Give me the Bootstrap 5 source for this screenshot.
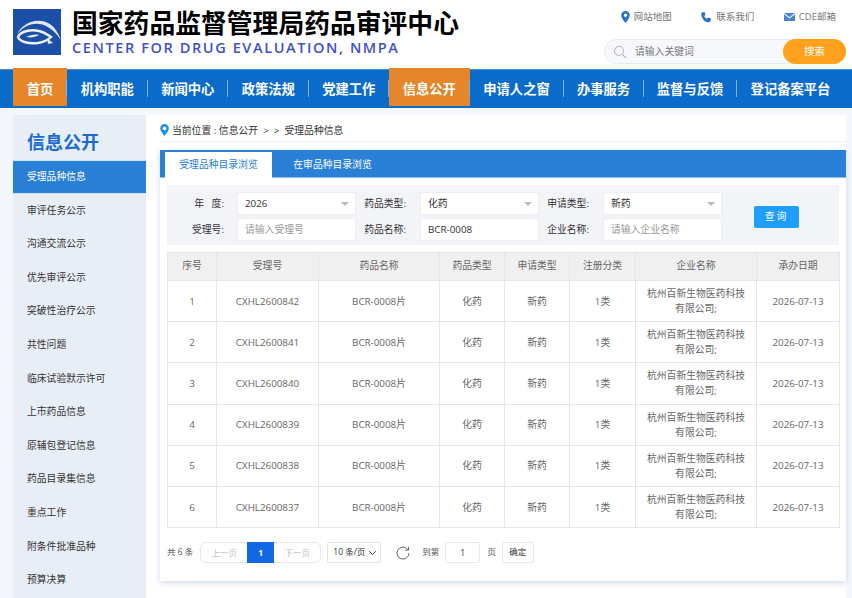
<!DOCTYPE html>
<html lang="zh-CN">
<head>
  <meta charset="UTF-8" />
  <title>受理品种信息</title>
  <meta name="viewport" content="width=device-width, initial-scale=1" />
  <link href="https://cdn.jsdelivr.net/npm/bootstrap@5.3.3/dist/css/bootstrap.min.css" rel="stylesheet" />
  <style>
    html, body { height:100%; overflow:hidden; }
    body { background:#f4f8fe; font-family:"Open Sans","Noto Sans CJK SC",sans-serif; font-size:9.8px; color:#666; }
    .site-head { height:69px; background:#fff; padding:9px 6px 0 13px; }
    .site-logo { width:48px; height:46px; flex:none; }
    .brand-cn { font-family:"Noto Sans CJK SC",sans-serif; font-size:25.8px; line-height:25px; font-weight:700; color:#000; margin-left:-1px; white-space:nowrap; }
    .brand-en { font-size:14.5px; line-height:18px; font-weight:600; letter-spacing:1.6px; color:#3f51c5; margin-top:5px; margin-left:-1px; white-space:nowrap; }
    .head-link { font-size:9.5px; color:#777; line-height:14px; }
    .head-links { gap:29.5px; height:30px; padding-top:1px; margin-right:10px; }
    .search-pill { width:242px; height:25px; background:#f7f8fc; border:1px solid #e6e9f0; border-radius:13px; position:relative; }
    .search-text { font-size:9.8px; color:#777; margin-left:8px; padding-top:2px; }
    .search-go { position:absolute; right:-1px; top:-1px; width:63px; height:25px; border-radius:13px; background:#ffa11c; color:#fff; font-size:10.5px; border:0; padding:0; }
    .main-nav { height:39px; background:#0b6bcb; border-top:1px solid #3f8fdc; padding-left:13px; }
    .main-nav a { display:block; height:38px; line-height:37px; font-family:"Noto Sans CJK SC",sans-serif; color:#fff; font-size:13.3px; font-weight:700; text-decoration:none; text-align:center; white-space:nowrap; position:relative; }
    .main-nav a.on { background:#e5862a; margin-top:-2px; line-height:41px; }
    .main-nav li:not(:last-child) a::after { content:""; position:absolute; right:0; top:10px; height:17px; border-right:1px solid #7fb3e6; }
    .main-nav li a.on::after { top:12px; }
    .page-wrap { height:calc(100vh - 108px); padding:7px 6px 0 13px; }
    .side-col { width:133px; flex:none; background:#e8eef6; }
    .side-title { height:38px; padding-top:15px; padding-left:14px; font-family:"Noto Sans CJK SC",sans-serif; font-size:18px; line-height:22px; font-weight:700; color:#1a6bd0; margin-bottom:7px; }
    .side-item { display:block; height:33.6px; line-height:33px; padding-left:14px; color:#333; text-decoration:none; }
    .side-item.on { background:#2a80d6; color:#fff; border-top:1px solid #cfe0f3; border-bottom:1px solid #cfe0f3; line-height:32px; }
    .body-col { flex:1; min-width:0; background:#fff; padding-left:14px; }
    .crumb { height:27px; padding-top:8px; border-bottom:1px solid #eee; line-height:15px; color:#333; margin-bottom:8px; }
    .crumb svg { margin-right:3px; margin-top:1px; }
    .panel-box { height:431px; box-shadow:0 2px 6px rgba(90,120,170,.28); background:#fff; }
    .tab-bar { height:28px; background:#2a80d6; padding:2px 0 0 5px; border:0; border-bottom:1px solid #8fbdea; }
    .tab-bar .nav-link { height:26px; line-height:26px; padding:0; width:107px; border:0; border-radius:0; font-size:9.8px; color:#fff; text-align:center; margin-right:7px; background:none; }
    .tab-bar .nav-link.active { background:#fff; color:#2a80d6; }
    .filter-box { margin:7px 7px 0; height:60px; background:#f2f4f8; padding-top:7px; }
    .filter-row { height:23px; margin-bottom:3px; }
    .field-label { width:64px; flex:none; text-align:right; padding-right:14px; line-height:23px; color:#333; white-space:nowrap; }
    .field-label.lead-in { width:70px; padding-right:13px; }
    .field-ctl { width:119px; flex:none; height:23px; min-height:23px; padding:0 7px; font-size:9.8px; color:#333; border:1px solid #eceef2; border-radius:2px; background-color:#fff; }
    .field-ctl::placeholder { color:#999; }
    select.field-ctl { padding:2px 7px 0; background-position:right 4px center; background-size:12px 8px; background-image:url("data:image/svg+xml,%3Csvg xmlns='http://www.w3.org/2000/svg' viewBox='0 0 12 8'%3E%3Cpath fill='%23bbb' d='M2 2h8L6 6z'/%3E%3C/svg%3E"); }
    .go-btn { width:45px; height:22px; padding:0; margin-left:32px; margin-top:14px; background:#1e9fff; border:0; border-radius:2px; color:#fff; font-size:9.8px; letter-spacing:2px; }
    .data-wrap { margin:7px 7px 0; }
    .data-table { table-layout:fixed; width:100%; margin:0; border-color:#e4e6ea; font-size:9.8px; color:#666; }
    .data-table th { height:28px; padding:0; background:#f0f0f0; font-weight:400; color:#666; text-align:center; vertical-align:middle; }
    .data-table td { height:41.2px; padding:0 8px; line-height:15px; text-align:center; vertical-align:middle; color:#666; }
    .pager-row { margin:14px 7px 0; height:21px; font-size:8.5px; color:#555; }
    .pager-row .pagination { margin:0 0 0 7px; }
    .pager-row .page-link { width:48px; height:21px; padding:0; line-height:19px; text-align:center; font-size:8.5px; color:#c4c4c4; border-color:#e8e8e8; border-radius:0; background:#fff; }
    .pager-row .active .page-link { width:27px; background:#1268e3; border-color:#1268e3; color:#fff; font-weight:700; }
    .size-pick { width:54px; height:21px; min-height:21px; margin-left:6px; padding:0 0 0 5px; font-size:8.5px; color:#333; border-color:#e4e4e4; border-radius:2px; background-position:right 3px center; background-size:9px 8px; }
    .reload-icon { margin-left:15px; margin-right:12px; }
    .jump-box { width:35px; height:21px; min-height:21px; padding:0; margin:0 7px 0 6px; text-align:center; font-size:8.5px; color:#333; border-color:#e8e8e8; border-radius:2px; }
    .ok-btn { width:32px; height:21px; padding:0; margin-left:6px; font-size:8.5px; color:#333; background:#fff; border:1px solid #e8e8e8; border-radius:2px; }
  </style>
</head>
<body>

  <header class="site-head d-flex">
    <svg class="site-logo" viewBox="0 0 48 46">
      <rect width="48" height="46" fill="#1b4fa8"/>
      <path d="M4 26C8 14 24 8 35 14c6 3 10 9 13 17-5-7-9-11-15-14C23 12 10 16 4 26z" fill="#dfe6f4"/>
      <path d="M5 28c3-6 13-8 21-6 5 1 9 4 12 6-3 3-7 5-13 6-9 1-18-1-20-6z" fill="none" stroke="#eef2fa" stroke-width="2.4"/>
      <path d="M13 28c4-2 9-3 13-2-3 2-8 3-13 2z" fill="#dfe6f4"/>
      <path d="M34 29l6 5-5 1z" fill="#dfe6f4"/>
    </svg>
    <div class="ms-2 ps-1 flex-grow-0">
      <div class="brand-cn">国家药品监督管理局药品审评中心</div>
      <div class="brand-en">CENTER FOR DRUG EVALUATION, NMPA</div>
    </div>
    <div class="ms-auto d-flex flex-column align-items-end">
      <div class="head-links d-flex align-items-start">
        <span class="head-link d-flex align-items-center gap-1">
          <svg width="9" height="12" viewBox="0 0 9 12"><path d="M4.5 0A4.3 4.3 0 0 0 .2 4.3C.2 7.3 4.5 12 4.5 12s4.3-4.7 4.3-7.7A4.3 4.3 0 0 0 4.5 0zm0 6a1.7 1.7 0 1 1 0-3.4 1.7 1.7 0 0 1 0 3.4z" fill="#2a72c8"/></svg>网站地图</span>
        <span class="head-link d-flex align-items-center gap-1">
          <svg width="11" height="11" viewBox="0 0 11 11"><path d="M1 .5l2.5-.5 1 3-1.3 1c.5 1.3 1.500 2.300 2.800 2.800l1-1.300 3 1-.5 2.500c-.3 1-1.500 1.500-2.500 1.200C3.500 9.700 1.300 7.500.3 3 0 2 .3 1 1 .5z" fill="#2a72c8"/></svg>联系我们</span>
        <span class="head-link d-flex align-items-center gap-1">
          <svg width="11" height="8" viewBox="0 0 11 8"><path d="M0 0h11L5.500 4.200z" fill="#4a86d4"/><path d="M0 1.200V8h11V1.200L5.500 5.500z" fill="#4a86d4"/></svg>CDE邮箱</span>
      </div>
      <div class="search-pill d-flex align-items-center ps-2">
        <svg width="14" height="14" viewBox="0 0 14 14"><circle cx="6" cy="6" r="4.500" fill="none" stroke="#bbb" stroke-width="1.100"/><path d="M9.500 9.500L13 13" stroke="#bbb" stroke-width="1.300"/></svg>
        <span class="search-text">请输入关键词</span>
        <button class="search-go">搜索</button>
      </div>
    </div>
  </header>

  <nav class="main-nav">
    <ul class="list-unstyled d-flex m-0" id="mainNav"></ul>
  </nav>

  <div class="page-wrap d-flex">
    <aside class="side-col overflow-hidden">
      <div class="side-title">信息公开</div>
      <div id="sideNav"></div>
    </aside>

    <main class="body-col">
      <div class="crumb d-flex align-items-start">
        <svg width="9" height="12" viewBox="0 0 9 12"><path d="M4.500 0A4.300 4.300 0 0 0 .2 4.300C.2 7.300 4.500 12 4.500 12s4.300-4.700 4.300-7.700A4.300 4.300 0 0 0 4.500 0zm0 6.200a1.900 1.900 0 1 1 0-3.800 1.900 1.900 0 0 1 0 3.800z" fill="#1e90e8"/></svg>
        <span>当前位置 : 信息公开 &nbsp;&gt; &nbsp;&gt; &nbsp;受理品种信息</span>
      </div>

      <section class="panel-box">
        <ul class="nav nav-tabs tab-bar">
          <li class="nav-item"><a class="nav-link active" href="#">受理品种目录浏览</a></li>
          <li class="nav-item"><a class="nav-link" href="#">在审品种目录浏览</a></li>
        </ul>

        <div class="filter-box d-flex">
          <div>
            <div class="filter-row d-flex">
              <label class="field-label lead-in">年&nbsp;&nbsp;&nbsp;度:</label>
              <select class="form-select field-ctl"><option>2026</option></select>
              <label class="field-label">药品类型:</label>
              <select class="form-select field-ctl"><option>化药</option></select>
              <label class="field-label">申请类型:</label>
              <select class="form-select field-ctl"><option>新药</option></select>
            </div>
            <div class="filter-row d-flex">
              <label class="field-label lead-in">受理号:</label>
              <input class="form-control field-ctl" placeholder="请输入受理号" />
              <label class="field-label">药品名称:</label>
              <input class="form-control field-ctl" value="BCR-0008" />
              <label class="field-label">企业名称:</label>
              <input class="form-control field-ctl" placeholder="请输入企业名称" />
            </div>
          </div>
          <button class="btn go-btn">查询</button>
        </div>

        <div class="data-wrap">
          <table class="table table-bordered data-table">
            <colgroup>
              <col style="width:49px"><col style="width:102px"><col style="width:121px"><col style="width:65px">
              <col style="width:65px"><col style="width:66px"><col style="width:121px"><col style="width:83px">
            </colgroup>
            <thead>
              <tr><th>序号</th><th>受理号</th><th>药品名称</th><th>药品类型</th><th>申请类型</th><th>注册分类</th><th>企业名称</th><th>承办日期</th></tr>
            </thead>
            <tbody id="rows"></tbody>
          </table>
        </div>

        <div class="pager-row d-flex align-items-center">
          <span>共 6 条</span>
          <ul class="pagination">
            <li class="page-item"><a class="page-link" href="#">上一页</a></li>
            <li class="page-item active"><a class="page-link" href="#">1</a></li>
            <li class="page-item"><a class="page-link" href="#">下一页</a></li>
          </ul>
          <select class="form-select size-pick"><option>10 条/页</option></select>
          <svg class="reload-icon" width="14" height="14" viewBox="0 0 14 14"><path d="M11.800 3.500A6 6 0 1 0 13 7" fill="none" stroke="#666" stroke-width="1"/><path d="M12.500 .8v3.400H9.100" fill="none" stroke="#666" stroke-width="1"/></svg>
          <span>到第</span>
          <input class="form-control jump-box" value="1" />
          <span>页</span>
          <button class="ok-btn">确定</button>
        </div>
      </section>
    </main>
  </div>

  <script>
    const navItems = [
      ["首页", 54, true], ["机构职能", 80.5], ["新闻中心", 80.5], ["政策法规", 80.5], ["党建工作", 80.5],
      ["信息公开", 80.5, true], ["申请人之窗", 94], ["办事服务", 80], ["监督与反馈", 93], ["登记备案平台", 108]
    ];
    document.getElementById("mainNav").innerHTML = navItems.map(n =>
      `<li style="width:${n[1]}px"><a href="#" class="${n[2] ? "on" : ""}">${n[0]}</a></li>`).join("");

    const sideItems = ["受理品种信息","审评任务公示","沟通交流公示","优先审评公示","突破性治疗公示","共性问题","临床试验默示许可","上市药品信息","原辅包登记信息","药品目录集信息","重点工作","附条件批准品种","预算决算"];
    document.getElementById("sideNav").innerHTML = sideItems.map((s, i) =>
      `<a href="#" class="side-item ${i === 0 ? "on" : ""}">${s}</a>`).join("");

    const nums = ["842","841","840","839","838","837"];
    document.getElementById("rows").innerHTML = nums.map((n, i) => `
      <tr>
        <td>${i + 1}</td><td>CXHL2600${n}</td><td>BCR-0008片</td><td>化药</td><td>新药</td><td>1类</td>
        <td>杭州百新生物医药科技有限公司;</td><td>2026-07-13</td>
      </tr>`).join("");
  </script>
  <script src="https://cdn.jsdelivr.net/npm/bootstrap@5.3.3/dist/js/bootstrap.bundle.min.js"></script>
</body>
</html>
